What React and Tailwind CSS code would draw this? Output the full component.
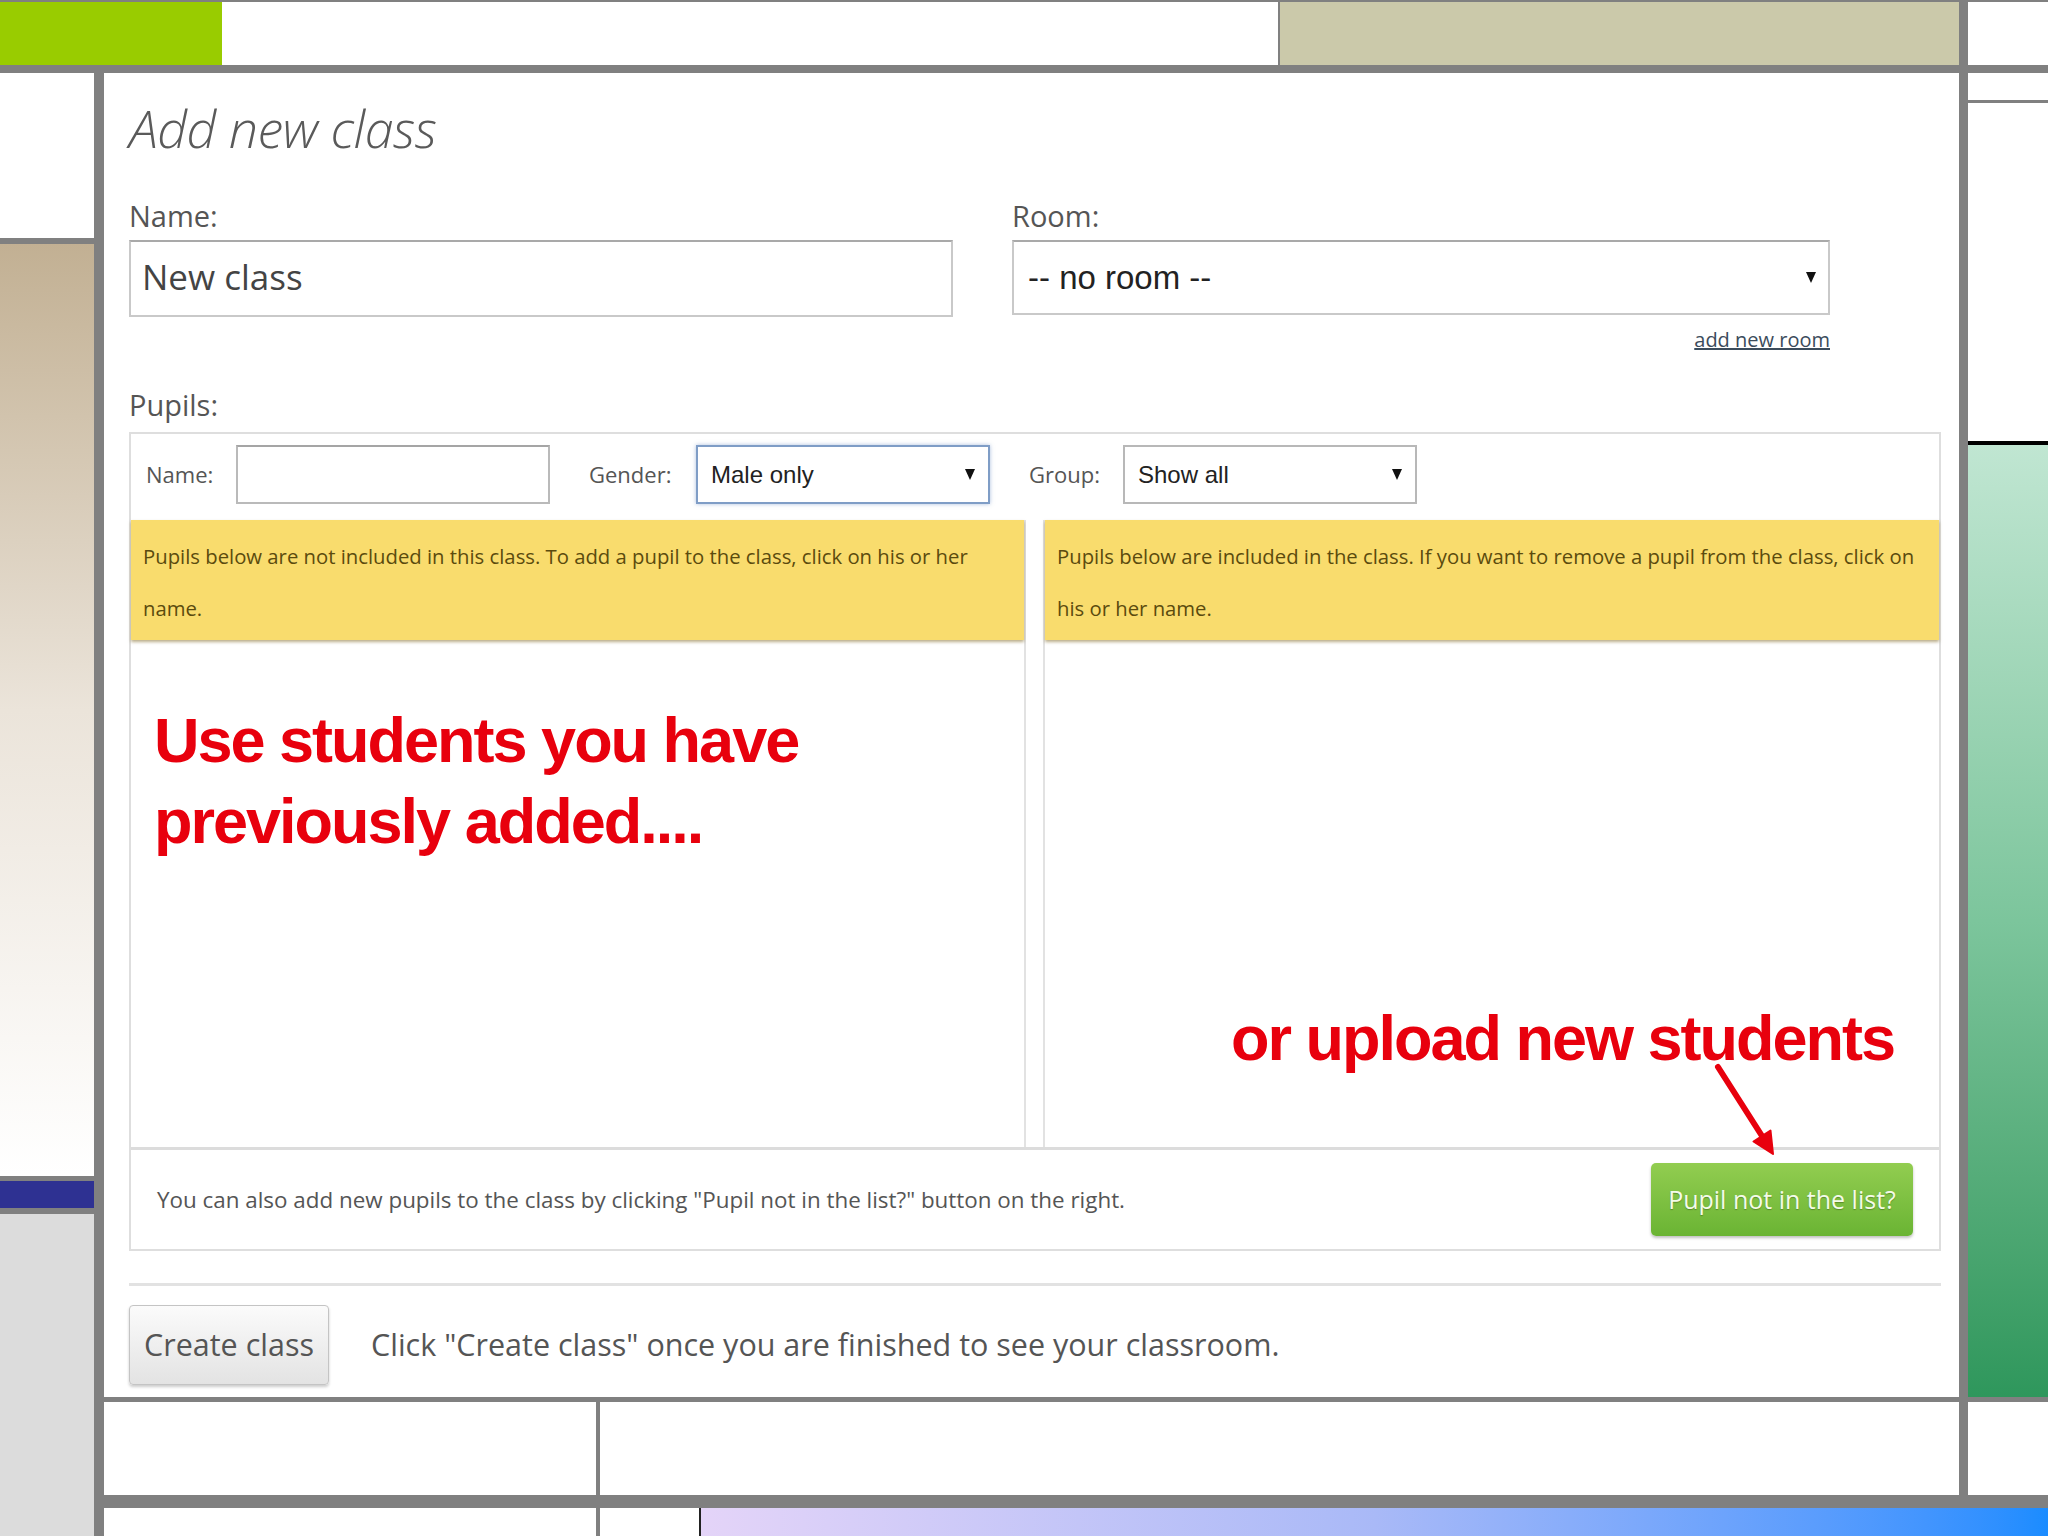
const Caret = () => (
  <svg width="10" height="13" viewBox="0 0 10 13" className="shrink-0">
    <path d="M0 1h10L5 12z" fill="#111" />
  </svg>
);

const ARIAL = "font-['Liberation_Sans',Arial,sans-serif]";

function PupilsBox() {
  return (
    <div className="relative border-2 border-[#dedede]">
      {/* filters */}
      <div className="h-[86px] pb-[5px] flex items-center pl-[15px] text-[22px] text-[#555]">
        <span className="w-[67px] mr-[23px]">Name:</span>
        <div className="w-[314px] h-[59px] border-2 border-[#bababa] border-t-[#a5a5a5] bg-white" />
        <span className="w-[84px] ml-[39px] mr-[23px]">Gender:</span>
        <div className={`w-[294px] h-[59px] border-2 border-[#7f9dc6] shadow-[0_0_4px_rgba(90,130,190,0.5)] flex items-center justify-between pl-[13px] pr-[13px] text-[24px] text-[#222] ${ARIAL}`}>
          Male only
          <Caret />
        </div>
        <span className="w-[71px] ml-[39px] mr-[23px]">Group:</span>
        <div className={`w-[294px] h-[59px] border-2 border-[#b8b8b8] flex items-center justify-between pl-[13px] pr-[13px] text-[24px] text-[#222] ${ARIAL}`}>
          Show all
          <Caret />
        </div>
      </div>

      {/* the two lists */}
      <div className="flex h-[630px] border-b-[3px] border-[#dcdcdc]">
        <div className="w-[895px] flex flex-col border-r-2 border-[#e2e2e2]">
          <div className="h-[120px] bg-[#f9dc6d] pt-[10px] pl-[12px] pr-[12px] text-[20.3px] leading-[52px] text-[#5b4b0e] shadow-[0_2px_3px_rgba(130,105,40,0.55)]">
            Pupils below are not included in this class. To add a pupil to the class, click on his or her name.
          </div>
          <div className={`flex-1 pt-[60px] pl-[23px] text-[63px] leading-[81px] font-bold tracking-[-2px] text-[#e8000d] ${ARIAL}`}>
            Use students you have previously added....
          </div>
        </div>
        <div className="w-[17px] bg-white" />
        <div className="flex-1 flex flex-col border-l-2 border-[#e2e2e2]">
          <div className="h-[120px] bg-[#f9dc6d] pt-[10px] pl-[12px] pr-[12px] text-[20.3px] leading-[52px] text-[#5b4b0e] shadow-[0_2px_3px_rgba(130,105,40,0.55)]">
            Pupils below are included in the class. If you want to remove a pupil from the class, click on his or her name.
          </div>
          <div className={`flex-1 flex flex-col justify-end pb-[68px] pl-[186px] text-[63px] leading-[81px] font-bold tracking-[-2px] text-[#e8000d] ${ARIAL}`}>
            or upload new students
          </div>
        </div>
      </div>

      {/* footer */}
      <div className="h-[99px] flex items-center justify-between pl-[26px] pr-[26px]">
        <span className="text-[22.4px] text-[#555]">
          You can also add new pupils to the class by clicking "Pupil not in the list?" button on the right.
        </span>
        <button className="w-[262px] h-[73px] rounded-[5px] bg-linear-to-b from-[#92cd50] to-[#6ab433] text-[#f4fbe9] text-[25px] [text-shadow:0_1px_1px_rgba(60,90,20,0.5)] shadow-[0_2px_3px_rgba(0,0,0,0.25)]">
          Pupil not in the list?
        </button>
      </div>

      {/* annotation arrow */}
      <svg className="absolute left-[1575px] top-[625px]" width="80" height="110" viewBox="0 0 80 110">
        <line x1="12" y1="8" x2="56" y2="77" stroke="#e8000d" strokeWidth="6" strokeLinecap="round" />
        <path d="M67 95 L47.5 82.5 L64.5 71.5 Z" fill="#e8000d" stroke="#e8000d" strokeWidth="2" strokeLinejoin="round" />
      </svg>
    </div>
  );
}

function Panel() {
  return (
    <div className="h-[1324px] bg-white pl-[25px] pr-[18px] flex flex-col">
      <h1 className="mt-[25px] h-[60px] leading-[60px] text-[52px] font-light italic tracking-[-0.5px] text-[#5a5a5a]">
        Add new class
      </h1>

      <div className="mt-[40px] grid grid-cols-[824px_818px] gap-x-[59px]">
        <div>
          <div className="h-[36px] leading-[36px] text-[29px] text-[#555]">Name:</div>
          <div className="mt-[6px] h-[77px] border-2 border-[#c9c9c9] border-t-[#a9a9a9] flex items-center pl-[11px] pb-[2px] text-[35px] text-[#444]">
            New class
          </div>
        </div>
        <div>
          <div className="h-[36px] leading-[36px] text-[29px] text-[#555]">Room:</div>
          <div className={`mt-[6px] h-[75px] border-2 border-[#c9c9c9] border-t-[#a9a9a9] flex items-center justify-between pl-[14px] pr-[12px] text-[33px] text-[#222] ${ARIAL}`}>
            -- no room --
            <Caret />
          </div>
          <div className="mt-[13px] h-[24px] leading-[24px] text-right text-[20px] text-[#3b4c5c] underline">
            add new room
          </div>
        </div>
      </div>

      <div className="mt-[35px] h-[36px] leading-[36px] text-[29px] text-[#555]">Pupils:</div>
      <div className="mt-[9px]">
        <PupilsBox />
      </div>

      <div className="mt-[32px] h-[3px] bg-[#e2e2e2]" />
      <div className="mt-[19px] flex items-center">
        <button className="w-[200px] h-[80px] rounded-[4px] border border-[#c4c4c4] bg-linear-to-b from-[#fbfbfb] to-[#e3e3e3] shadow-[0_2px_3px_rgba(0,0,0,0.2)] text-[30.5px] text-[#555]">
          Create class
        </button>
        <span className="ml-[42px] text-[30.5px] text-[#555]">
          Click "Create class" once you are finished to see your classroom.
        </span>
      </div>
    </div>
  );
}

export default function App() {
  return (
    <div className="w-[2048px] h-[1536px] overflow-hidden bg-[#808080] font-['Open_Sans',sans-serif]">
      {/* top band */}
      <div className="flex h-[65px]">
        <div className="w-[222px] mt-[2px] bg-[#99cc00]" />
        <div className="w-[1056px] mt-[2px] bg-white" />
        <div className="w-[2px]" />
        <div className="w-[679px] mt-[2px] bg-[#cbc9aa]" />
        <div className="w-[9px]" />
        <div className="flex-1 mt-[2px] bg-white" />
      </div>

      <div className="flex mt-[8px] h-[1463px]">
        {/* left strip */}
        <div className="w-[94px] flex flex-col">
          <div className="h-[165px] bg-white" />
          <div className="h-[6px]" />
          <div className="h-[932px] bg-linear-to-b from-[#c2b093] via-[#ebe4da] to-white" />
          <div className="h-[5px]" />
          <div className="h-[27px] bg-[#2e3192]" />
          <div className="h-[6px]" />
          <div className="flex-1 bg-[#dcdcdc]" />
        </div>
        <div className="w-[10px]" />

        <div className="flex-1 flex flex-col">
          <div className="flex h-[1422px]">
            <div className="w-[1855px] flex flex-col">
              <Panel />
              <div className="h-[5px]" />
              <div className="flex-1 flex">
                <div className="w-[492px] bg-white" />
                <div className="w-[4px]" />
                <div className="flex-1 bg-white" />
              </div>
            </div>
            <div className="w-[9px]" />
            {/* right strip */}
            <div className="flex-1 flex flex-col">
              <div className="h-[27px] bg-white" />
              <div className="h-[3px]" />
              <div className="h-[338px] bg-white" />
              <div className="h-[4px] bg-black" />
              <div className="h-[952px] bg-linear-to-b from-[#c0e6d2] via-[#7cc59c] to-[#2e975c]" />
              <div className="h-[5px]" />
              <div className="flex-1 bg-white" />
            </div>
          </div>
          <div className="h-[13px]" />
          <div className="flex-1 flex">
            <div className="w-[492px] bg-white" />
            <div className="w-[4px]" />
            <div className="w-[99px] bg-white" />
            <div className="w-[2px] bg-[#222]" />
            <div className="flex-1 bg-linear-to-r from-[#e4d4f8] via-[#a9b9f7] to-[#1a8cff]" />
          </div>
        </div>
      </div>
    </div>
  );
}
